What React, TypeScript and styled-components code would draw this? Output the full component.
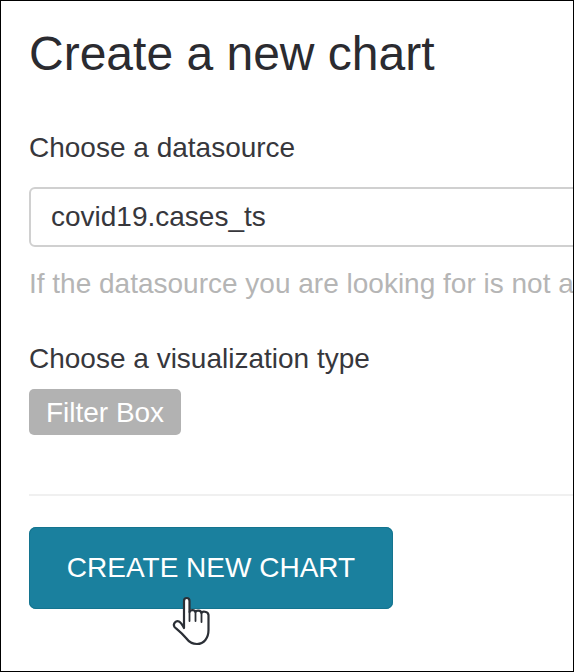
import React from "react";
import styled, { createGlobalStyle } from "styled-components";

const GlobalStyle = createGlobalStyle`
  html, body {
    margin: 0;
    padding: 0;
    background: #fff;
  }
  body {
    font-family: "Liberation Sans", Arial, sans-serif;
  }
`;

const Frame = styled.div`
  position: relative;
  box-sizing: border-box;
  width: 574px;
  height: 672px;
  padding: 0 0 0 28px;
  border: 1px solid #000;
  overflow: hidden;
  background: #fff;
  color: #323232;
`;

const Title = styled.h1`
  margin: 25px 0 0;
  font-size: 48px;
  line-height: 56px;
  font-weight: 400;
  color: #2b2b30;
`;

const Label = styled.div<{ $top: number }>`
  margin-top: ${(p) => p.$top}px;
  font-size: 28px;
  line-height: 34px;
  color: #37373c;
  white-space: nowrap;
`;

const SelectBox = styled.div`
  box-sizing: border-box;
  display: flex;
  align-items: center;
  width: 620px;
  height: 60px;
  margin-top: 22px;
  padding-left: 20px;
  border: 2px solid #d0d0d0;
  border-radius: 6px;
  font-size: 28px;
  color: #37373c;
`;

const HelpText = styled.div`
  margin-top: 20px;
  font-size: 28px;
  line-height: 34px;
  color: #b5b5b5;
  white-space: nowrap;
`;

const Tag = styled.div`
  box-sizing: border-box;
  display: inline-flex;
  align-items: center;
  justify-content: center;
  width: 152px;
  height: 46px;
  margin-top: 13px;
  padding-top: 2px;
  border-radius: 5px;
  background: #b2b2b2;
  color: #fff;
  font-size: 28px;
`;

const Divider = styled.hr`
  width: 620px;
  height: 2px;
  margin: 59px 0 0;
  border: 0;
  background: #f0f0f0;
`;

const CreateButton = styled.button`
  display: block;
  width: 364px;
  height: 82px;
  margin-top: 31px;
  padding: 0;
  border: 0;
  border-radius: 7px;
  background: #1a809e;
  box-shadow: inset 0 0 0 1px #14748f;
  color: #fff;
  font-family: inherit;
  font-size: 28px;
`;

const Pointer = styled.svg`
  position: absolute;
  left: 169px;
  top: 593px;
  width: 42px;
  height: 54px;
`;

const HandCursor = () => (
  <Pointer viewBox="0 0 42 54" fill="#fff" stroke="#2b2f36" strokeWidth="2.2" strokeLinejoin="round" strokeLinecap="round">
    <path d="M14 34L14 7C14 3 19.500 3 19.500 7L19.500 18C20 15.500 25 15.500 25.500 18C26 16 31 16 31.500 19C32 17 38 17 38.500 21L38.500 36C38.500 44 34 50 27 50C22 50 19 48 16 44C12 39 8 36 4.500 33C2.500 30 6 26 9 27.500C11 28.500 12.500 31 14 34Z" />
    <path d="M19.500 18v9M25.500 18v9M31.500 19v9" fill="none" strokeWidth="1.800" />
  </Pointer>
);

export default function App() {
  return (
    <>
      <GlobalStyle />
      <Frame>
        <Title>Create a new chart</Title>
        <Label $top={49}>Choose a datasource</Label>
        <SelectBox>covid19.cases_ts</SelectBox>
        <HelpText>If the datasource you are looking for is not available in the list</HelpText>
        <Label $top={41}>Choose a visualization type</Label>
        <Tag>Filter Box</Tag>
        <Divider />
        <CreateButton>CREATE NEW CHART</CreateButton>
        <HandCursor />
      </Frame>
    </>
  );
}
